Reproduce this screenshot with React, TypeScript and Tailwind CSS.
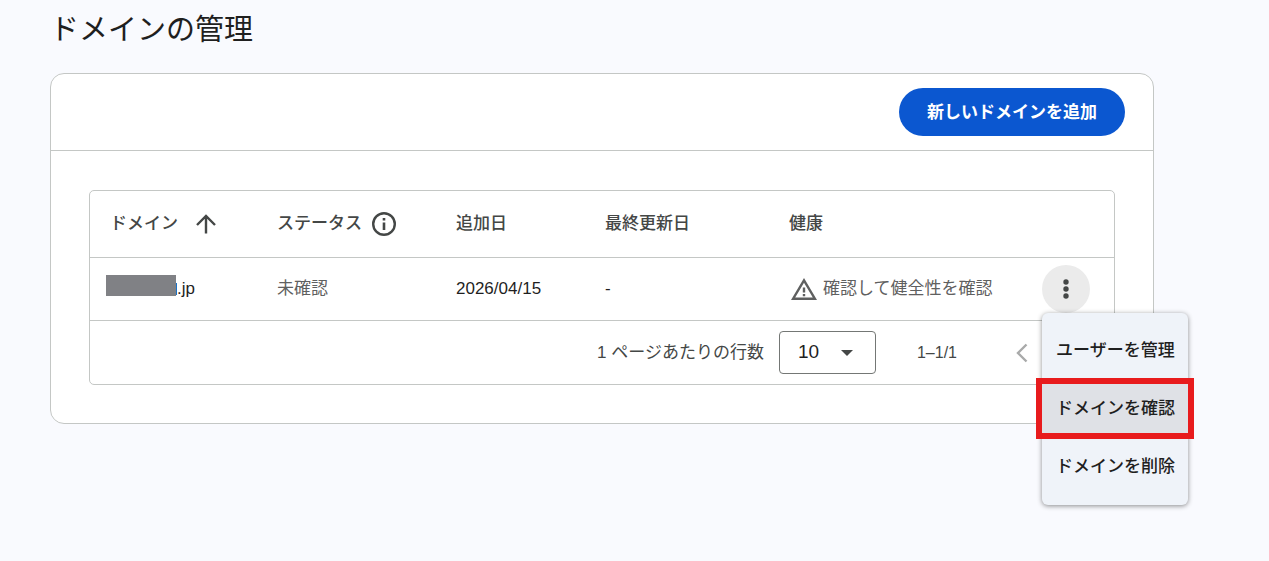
const colunas = ["追加日", "最終更新日", "健康"];

const menu = [
  { texto: "ユーザーを管理", ativo: false },
  { texto: "ドメインを確認", ativo: true },
  { texto: "ドメインを削除", ativo: false },
];

function Seta() {
  return (
    <svg viewBox="0 0 20 20" className="size-5" fill="none" stroke="currentColor" strokeWidth="2.4">
      <path d="M10 19.500V2M1 11l9-9 9 9" />
    </svg>
  );
}

function Info() {
  return (
    <svg viewBox="0 0 24 24" className="size-6" fill="none">
      <circle cx="12" cy="12" r="10.800" stroke="currentColor" strokeWidth="2.400" />
      <path d="M10.700 10.500h2.600V18h-2.600zM10.700 6h2.600v2.600h-2.600z" fill="currentColor" />
    </svg>
  );
}

function Alerta() {
  return (
    <svg viewBox="-2 0 28 22" className="h-[22px] w-7 shrink-0" fill="currentColor">
      <path fillRule="evenodd" d="M0 22L13 0l13 22zM4.200 19.500h17.600L13 4.700z" />
      <path d="M11.800 9.500h2.400v5h-2.400zM11.800 16h2.400v2.300h-2.400z" />
    </svg>
  );
}

function Menu() {
  return (
    <ul
      role="menu"
      className="absolute top-full left-0 z-10 w-[146px] rounded-md bg-[#eff3f9] pt-2 pb-[10px] font-medium shadow-[0_1px_5px_rgba(0,0,0,0.45)]"
    >
      {menu.map((item) => (
        <li key={item.texto} role="none" className="relative">
          <button
            type="button"
            role="menuitem"
            className={
              item.ativo
                ? "h-[58px] w-full bg-[#dfe1e6] pt-0.5 pl-[14px] text-left whitespace-nowrap"
                : "h-[58px] w-full pt-0.5 pl-[14px] text-left whitespace-nowrap"
            }
          >
            {item.texto}
          </button>
          {item.ativo && (
            <span className="pointer-events-none absolute -inset-x-[6px] -top-px -bottom-[2px] border-6 border-[#e81b1d]" />
          )}
        </li>
      ))}
    </ul>
  );
}

function Tabela() {
  return (
    <div className="rounded-[5px] border border-[#c4c7c5]">
      <table className="w-full table-fixed text-left">
        <colgroup>
          <col className="w-[167px]" />
          <col className="w-[179px]" />
          <col className="w-[149px]" />
          <col className="w-[184px]" />
          <col />
          <col className="w-[92px]" />
        </colgroup>
        <thead>
          <tr className="h-[66px] border-b border-[#c4c7c5] text-[#444746]">
            <th className="pl-5 font-medium" aria-sort="ascending">
              <button type="button" className="flex items-center gap-[18px]">
                ドメイン
                <Seta />
              </button>
            </th>
            <th className="pl-5 font-medium">
              <div className="flex items-center gap-[10px]">
                ステータス
                <Info />
              </div>
            </th>
            {colunas.map((coluna) => (
              <th key={coluna} className="pl-5 font-medium">{coluna}</th>
            ))}
            <th aria-label="操作" />
          </tr>
        </thead>
        <tbody>
          <tr className="h-[63px] border-b border-[#c4c7c5] text-[#1f1f1f]">
            <td className="pl-4">
              <div className="flex items-center">
                <span className="mb-[6px] h-[21px] w-[70px] bg-[#808185]" />
                <span className="h-3 w-px bg-[#1a73c8]" />
                .jp
              </div>
            </td>
            <td className="pl-5 text-[#5f6060]">未確認</td>
            <td className="pl-5">2026/04/15</td>
            <td className="pl-5">-</td>
            <td className="pl-5 text-[#5f6060]">
              <div className="flex items-center gap-[6px]">
                <Alerta />
                確認して健全性を確認
              </div>
            </td>
            <td className="pl-5">
              <div className="relative size-12">
                <button
                  type="button"
                  aria-label="その他"
                  aria-haspopup="menu"
                  className="flex size-12 items-center justify-center rounded-full bg-[#ebebeb] text-[#444746]"
                >
                  <svg viewBox="0 0 6 20" className="h-5 w-[6px]" fill="currentColor">
                    <circle cx="3" cy="3" r="2.700" />
                    <circle cx="3" cy="10" r="2.700" />
                    <circle cx="3" cy="17" r="2.700" />
                  </svg>
                </button>
                <Menu />
              </div>
            </td>
          </tr>
        </tbody>
      </table>

      <div className="flex h-[63px] items-center justify-end pr-5 text-[#444746]">
        <label htmlFor="linhas" className="pt-0.5">1 ページあたりの行数</label>
        <div className="relative ml-[15px]">
          <select
            id="linhas"
            defaultValue="10"
            className="block h-[43px] w-[97px] appearance-none rounded border border-[#747775] bg-white pl-[18px] text-[19px] text-[#1f1f1f]"
          >
            <option>10</option>
            <option>20</option>
            <option>50</option>
          </select>
          <svg viewBox="0 0 12 6" className="pointer-events-none absolute top-[19px] right-[23px] h-[6px] w-3" fill="currentColor">
            <path d="M0 0h12L6 6z" />
          </svg>
        </div>
        <span className="mx-[41px] pt-0.5 text-base">1–1/1</span>
        <button type="button" aria-label="前のページ" disabled className="flex size-12 items-center justify-center pt-0.5 text-[#a9aaaa]">
          <svg viewBox="0 0 12 20" className="h-5 w-3" fill="none" stroke="currentColor" strokeWidth="2.400">
            <path d="M10.500 1.500L2 10l8.500 8.500" />
          </svg>
        </button>
        <button type="button" aria-label="次のページ" disabled className="flex size-12 items-center justify-center pt-0.5 text-[#a9aaaa]">
          <svg viewBox="0 0 12 20" className="h-5 w-3" fill="none" stroke="currentColor" strokeWidth="2.400">
            <path d="M1.500 1.500L10 10l-8.500 8.500" />
          </svg>
        </button>
      </div>
    </div>
  );
}

export default function App() {
  return (
    <main
      lang="ja"
      className="min-h-screen bg-[#f9fafe] pt-[10px] pr-[115px] pb-10 pl-[50px] font-['Liberation_Sans','Noto_Sans_CJK_JP',sans-serif] text-[17px] leading-6 text-[#1f1f1f]"
    >
      <h1 className="text-[29px] leading-10">ドメインの管理</h1>

      <section className="mt-[23px] rounded-[14px] border border-[#c4c7c5] bg-white">
        <div className="flex justify-end border-b border-[#c4c7c5] py-[14px] pr-7">
          <button type="button" className="h-12 rounded-full bg-[#0b57d0] px-7 pt-0.5 font-bold text-white">
            新しいドメインを追加
          </button>
        </div>
        <div className="p-[38px] pt-[39px]">
          <Tabela />
        </div>
      </section>
    </main>
  );
}
